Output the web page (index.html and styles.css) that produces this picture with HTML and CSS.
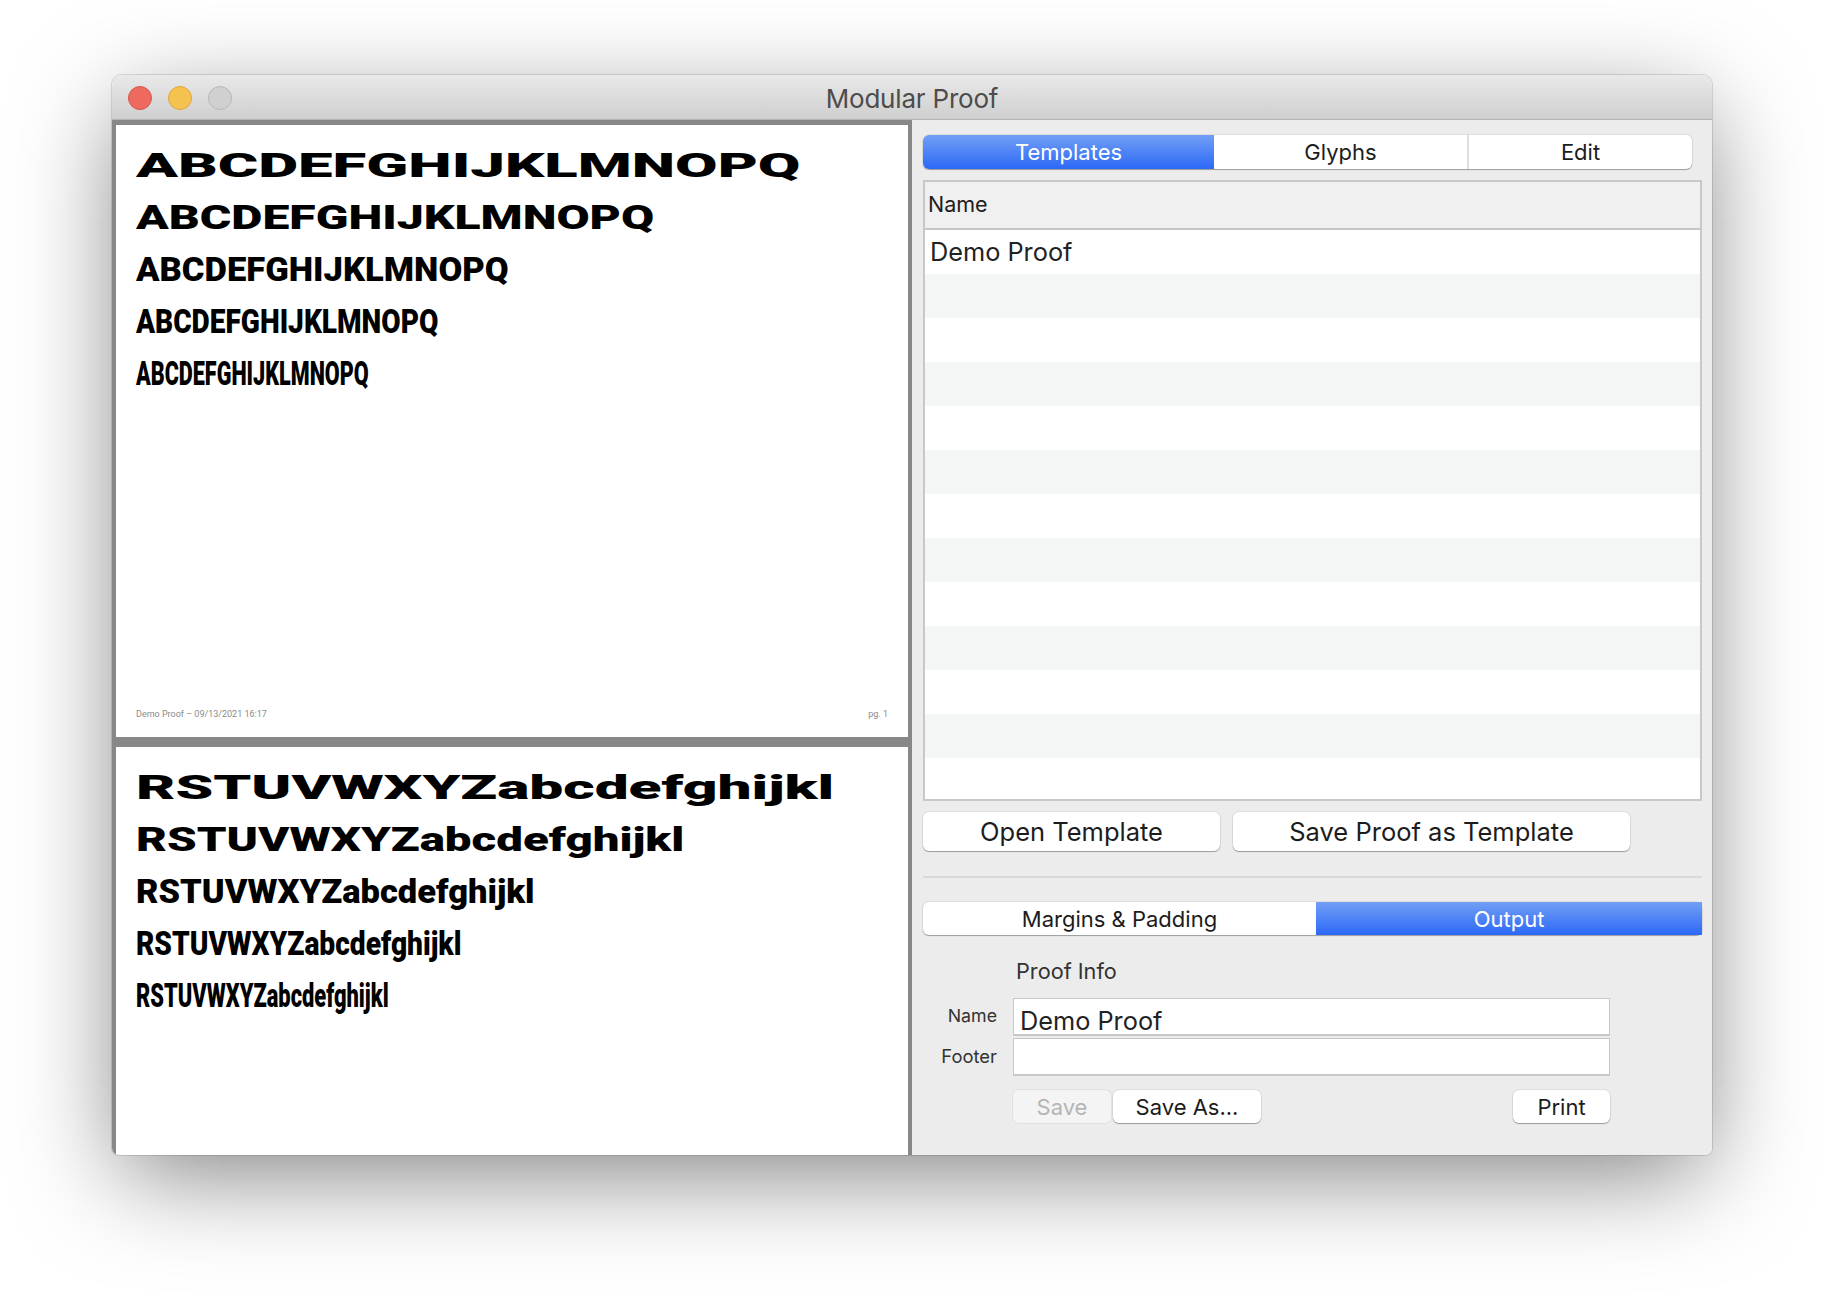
FILE: index.html
```html
<!DOCTYPE html>
<html>
<head>
<meta charset="utf-8">
<title>Modular Proof</title>
<link rel="stylesheet" href="styles.css">
</head>
<body>
<div class="window">
	<div class="titlebar">
		<div class="lights">
			<span class="light red"></span>
			<span class="light yellow"></span>
			<span class="light off"></span>
		</div>
		<div class="title">Modular Proof</div>
	</div>
	<div class="main">
		<div class="proof">
			<div class="pane first">
				<div class="line"><span class="spec a1">ABCDEFGHIJKLMNOPQ</span></div>
				<div class="line"><span class="spec a2">ABCDEFGHIJKLMNOPQ</span></div>
				<div class="line"><span class="spec a3">ABCDEFGHIJKLMNOPQ</span></div>
				<div class="line"><span class="spec a4">ABCDEFGHIJKLMNOPQ</span></div>
				<div class="line"><span class="spec a5">ABCDEFGHIJKLMNOPQ</span></div>
				<div class="foot">
					<span>Demo Proof – 09/13/2021 16:17</span>
					<span>pg. 1</span>
				</div>
			</div>
			<div class="pane second">
				<div class="line"><span class="spec b1">RSTUVWXYZabcdefghijkl</span></div>
				<div class="line"><span class="spec b2">RSTUVWXYZabcdefghijkl</span></div>
				<div class="line"><span class="spec b3">RSTUVWXYZabcdefghijkl</span></div>
				<div class="line"><span class="spec b4">RSTUVWXYZabcdefghijkl</span></div>
				<div class="line"><span class="spec b5">RSTUVWXYZabcdefghijkl</span></div>
			</div>
		</div>
		<div class="side">
			<div class="seg tabs">
				<div class="seg-item on tab-templates">Templates</div>
				<div class="seg-item tab-glyphs">Glyphs</div>
				<div class="seg-item tab-edit">Edit</div>
			</div>
			<div class="table">
				<div class="thead">Name</div>
				<div class="rows">
					<div class="row">Demo Proof</div>
					<div class="row"></div>
					<div class="row"></div>
					<div class="row"></div>
					<div class="row"></div>
					<div class="row"></div>
					<div class="row"></div>
					<div class="row"></div>
					<div class="row"></div>
					<div class="row"></div>
					<div class="row"></div>
					<div class="row"></div>
					<div class="row"></div>
				</div>
			</div>
			<div class="actions">
				<div class="btn big open">Open Template</div>
				<div class="btn big saveas">Save Proof as Template</div>
			</div>
			<div class="divider"></div>
			<div class="seg lower">
				<div class="seg-item tab-margins">Margins &amp; Padding</div>
				<div class="seg-item on tab-output">Output</div>
			</div>
			<div class="form">
				<div></div>
				<div class="group">Proof Info</div>
				<div class="label">Name</div>
				<div class="field">Demo Proof</div>
				<div class="label label-footer">Footer</div>
				<div class="field"></div>
				<div></div>
				<div class="form-btns">
					<div class="btn small off b-save">Save</div>
					<div class="btn small b-saveas">Save As...</div>
					<div class="btn small b-print">Print</div>
				</div>
			</div>
		</div>
	</div>
</div>
</body>
</html>
```
FILE: styles.css
```css
*{margin:0; padding:0; box-sizing:border-box;}
body{background:#fff; font-family:"Inter","Liberation Sans",sans-serif; color:#1c1c1c; height:1304px; overflow:hidden;}

.window{width:1600px; height:1080px; margin:75px 0 0 112px; border-radius:10px 10px 7px 7px; overflow:hidden; box-shadow:0 26px 100px -8px rgba(0,0,0,.5), 0 0 0 1px rgba(0,0,0,.12); display:flex; flex-direction:column;}

/* title bar */
.titlebar{height:45px; flex:none; padding-top:2px; display:grid; grid-template-columns:1fr auto 1fr; align-items:center; background:linear-gradient(#e9e9e9,#cfcfcf); border-bottom:1px solid #b4b4b4;}
.lights{display:flex; gap:16px; padding-left:16px;}
.light{width:24px; height:24px; border-radius:50%; border:1px solid;}
.red{background:#ee6a5f; border-color:#d8564b;}
.yellow{background:#f6c24f; border-color:#dfa63a;}
.off.light{background:#d0d0d0; border-color:#b8b8b8;}
.title{font-size:26px; color:#4c4c4c; letter-spacing:-.2px;}

.main{flex:1; display:flex; min-height:0;}

/* proof pages */
.proof{width:800px; flex:none; background:#888; padding:5px 4px 0; display:flex; flex-direction:column; gap:10px;}
.pane{background:#fff; padding:14px 20px 0; overflow:hidden;}
.first{height:612px; flex:none; display:flex; flex-direction:column;}
.second{flex:1;}
.line{height:52px; line-height:52px; white-space:nowrap;}
.spec{display:inline-block; font-family:"Roboto","Liberation Sans",sans-serif; font-weight:900; font-size:34px; color:#000; transform-origin:left center;}
.a1{transform:scaleX(1.813);}
.a2{transform:scaleX(1.414);}
.a3{transform:scaleX(1.017);}
.a4{transform:scaleX(.825);}
.a5{transform:scaleX(.635);}
.b1{transform:scaleX(1.776);}
.b2{transform:scaleX(1.395);}
.b3{transform:scaleX(1.014);}
.b4{transform:scaleX(.828);}
.b5{transform:scaleX(.643);}
.foot{margin-top:auto; padding:0 0 18px; display:flex; justify-content:space-between; font-size:9px; line-height:10px; color:#8a8a8a; font-family:"Roboto",sans-serif;}

/* right side */
.side{flex:1; background:#ececec; padding:15px 10px 0 11px; display:flex; flex-direction:column;}
.seg{display:flex; background:#fff; border-radius:6px; box-shadow:0 1px 1px rgba(0,0,0,.3), 0 0 0 1px rgba(0,0,0,.06); font-size:22px;}
.seg-item{display:flex; align-items:center; justify-content:center; height:100%; border-right:2px solid #dedede;}
.seg-item:last-child{border-right:0;}
.seg-item.on{background:linear-gradient(#729ff5,#2c68f6); color:#fff; border-right:0;}
.tabs{width:769px; height:34px; flex:none;}
.tab-templates{width:291px; border-radius:6px 0 0 6px;}
.tab-glyphs{width:255px;}
.tab-edit{flex:1;}

.table{margin-top:11px; height:621px; flex:none; border:2px solid #c8c8c8; display:flex; flex-direction:column; background:#fff; overflow:hidden;}
.thead{height:48px; flex:none; background:#f0f0f0; border-bottom:2px solid #c6c6c6; padding:0 0 2px 3px; display:flex; align-items:center; font-size:21.5px;}
.rows{flex:1; display:grid; grid-auto-rows:44px; min-height:0; overflow:hidden;}
.row{display:flex; align-items:center; padding:0 0 2px 5px; font-size:25.3px; color:#222;}
.row:nth-child(even){background:#f4f5f5;}

.btn{display:flex; align-items:center; justify-content:center; background:#fff; border-radius:6px; box-shadow:0 1px 1px rgba(0,0,0,.3), 0 0 0 1px rgba(0,0,0,.06);}
.actions{display:flex; gap:13px; margin-top:11px; flex:none;}
.big{height:39px; font-size:25.5px;}
.open{width:297px;}
.saveas{width:397px;}

.divider{height:2px; background:#d9d9d9; margin-top:25px; flex:none;}

.lower{height:33px; margin-top:24px; flex:none;}
.tab-margins{width:393px; border-right:0;}
.tab-output{flex:1;}
.lower .on{border-radius:0;}

/* output form */
.form{display:grid; grid-template-columns:90px 597px; grid-template-rows:61px 38px 38px auto; row-gap:2px;}
.group{font-size:21.7px; padding:24px 0 0 3px; line-height:24px; color:#333;}
.label{font-size:17.8px; text-align:right; padding-right:16px; line-height:36px; color:#333;}
.label-footer{font-size:18.4px;}
.field{background:#fff; border:2px solid #c8c8c8; border-width:1px 1px 2px 1px; font-size:25.3px; line-height:44px; padding-left:6px; height:38px; overflow:hidden; color:#222;}
.form-btns{display:flex; gap:2px; margin-top:12px;}
.small{height:33px; font-size:22px;}
.b-save{width:98px;}
.b-saveas{width:148px;}
.b-print{width:97px; margin-left:auto;}
.btn.off{background:#f4f4f4; color:#b4b4b4; box-shadow:0 0 0 1px rgba(0,0,0,.05);}
```
